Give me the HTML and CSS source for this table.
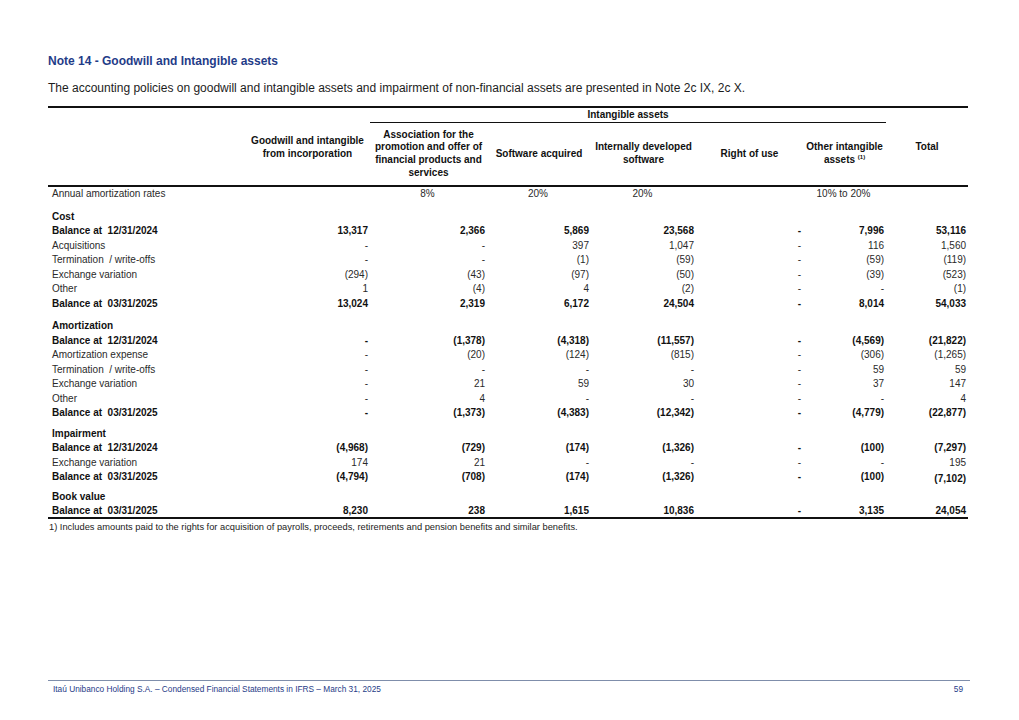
FILE: index.html
```html
<!DOCTYPE html>
<html>
<head>
<meta charset="utf-8">
<link rel="stylesheet" href="styles.css">
</head>
<body>
<div class="page">
  <h1 class="title">Note 14 - Goodwill and Intangible assets</h1>
  <p class="intro">The accounting policies on goodwill and intangible assets and impairment of non-financial assets are presented in Note 2c IX, 2c X.</p>
  <table class="fin">
    <colgroup>
      <col class="c-label"><col class="c1"><col class="c2"><col class="c3"><col class="c4"><col class="c5"><col class="c6"><col class="c7">
    </colgroup>
    <thead>
      <tr class="grp">
        <th></th><th></th>
        <th colspan="5" class="grp-cell">Intangible assets</th>
        <th></th>
      </tr>
      <tr class="hdr">
        <th></th>
        <th class="gw">Goodwill and intangible<br>from incorporation<br>&nbsp;</th>
        <th>Association for the<br>promotion and offer of<br>financial products and<br>services</th>
        <th>Software acquired</th>
        <th>Internally developed<br>software</th>
        <th>Right of use</th>
        <th>Other intangible<br>assets <sup>(1)</sup></th>
        <th>Total<br>&nbsp;</th>
      </tr>
    </thead>
    <tbody>
      <tr class="rates">
        <td class="lbl">Annual amortization rates</td><td></td><td class="ctr">8%</td><td class="ctr">20%</td><td class="ctr">20%</td><td></td><td class="ctr">10% to 20%</td><td></td>
      </tr>
      <tr class="sec first"><td class="lbl b">Cost</td><td></td><td></td><td></td><td></td><td></td><td></td><td></td></tr>
      <tr class="b"><td class="lbl">Balance at&nbsp; 12/31/2024</td><td>13,317</td><td>2,366</td><td>5,869</td><td>23,568</td><td>-</td><td>7,996</td><td>53,116</td></tr>
      <tr><td class="lbl">Acquisitions</td><td>-</td><td>-</td><td>397</td><td>1,047</td><td>-</td><td>116</td><td>1,560</td></tr>
      <tr><td class="lbl">Termination &nbsp;/ write-offs</td><td>-</td><td>-</td><td>(1)</td><td>(59)</td><td>-</td><td>(59)</td><td>(119)</td></tr>
      <tr><td class="lbl">Exchange variation</td><td>(294)</td><td>(43)</td><td>(97)</td><td>(50)</td><td>-</td><td>(39)</td><td>(523)</td></tr>
      <tr><td class="lbl">Other</td><td>1</td><td>(4)</td><td>4</td><td>(2)</td><td>-</td><td>-</td><td>(1)</td></tr>
      <tr class="b"><td class="lbl">Balance at&nbsp; 03/31/2025</td><td>13,024</td><td>2,319</td><td>6,172</td><td>24,504</td><td>-</td><td>8,014</td><td>54,033</td></tr>
      <tr class="sec"><td class="lbl b">Amortization</td><td></td><td></td><td></td><td></td><td></td><td></td><td></td></tr>
      <tr class="b"><td class="lbl">Balance at&nbsp; 12/31/2024</td><td>-</td><td>(1,378)</td><td>(4,318)</td><td>(11,557)</td><td>-</td><td>(4,569)</td><td>(21,822)</td></tr>
      <tr><td class="lbl">Amortization expense</td><td>-</td><td>(20)</td><td>(124)</td><td>(815)</td><td>-</td><td>(306)</td><td>(1,265)</td></tr>
      <tr><td class="lbl">Termination &nbsp;/ write-offs</td><td>-</td><td>-</td><td>-</td><td>-</td><td>-</td><td>59</td><td>59</td></tr>
      <tr><td class="lbl">Exchange variation</td><td>-</td><td>21</td><td>59</td><td>30</td><td>-</td><td>37</td><td>147</td></tr>
      <tr><td class="lbl">Other</td><td>-</td><td>4</td><td>-</td><td>-</td><td>-</td><td>-</td><td>4</td></tr>
      <tr class="b"><td class="lbl">Balance at&nbsp; 03/31/2025</td><td>-</td><td>(1,373)</td><td>(4,383)</td><td>(12,342)</td><td>-</td><td>(4,779)</td><td>(22,877)</td></tr>
      <tr class="sec imp"><td class="lbl b">Impairment</td><td></td><td></td><td></td><td></td><td></td><td></td><td></td></tr>
      <tr class="b"><td class="lbl">Balance at&nbsp; 12/31/2024</td><td>(4,968)</td><td>(729)</td><td>(174)</td><td>(1,326)</td><td>-</td><td>(100)</td><td>(7,297)</td></tr>
      <tr><td class="lbl">Exchange variation</td><td>174</td><td>21</td><td>-</td><td>-</td><td>-</td><td>-</td><td>195</td></tr>
      <tr class="b"><td class="lbl">Balance at&nbsp; 03/31/2025</td><td>(4,794)</td><td>(708)</td><td>(174)</td><td>(1,326)</td><td>-</td><td>(100)</td><td class="low">(7,102)</td></tr>
      <tr class="sec short"><td class="lbl b">Book value</td><td></td><td></td><td></td><td></td><td></td><td></td><td></td></tr>
      <tr class="b last"><td class="lbl">Balance at&nbsp; 03/31/2025</td><td>8,230</td><td>238</td><td>1,615</td><td>10,836</td><td>-</td><td>3,135</td><td>24,054</td></tr>
    </tbody>
  </table>
  <p class="foot-note">1) Includes amounts paid to the rights for acquisition of payrolls, proceeds, retirements and pension benefits and similar benefits.</p>
  <footer class="footer">
    <span class="foot-text">Itaú Unibanco Holding S.A. – Condensed Financial Statements in IFRS – March 31, 2025</span>
    <span class="page-no">59</span>
  </footer>
</div>
</body>
</html>
```
FILE: styles.css
```css
html, body {
  margin: 0;
  padding: 0;
  background: #ffffff;
}
body {
  font-family: "Liberation Sans", Arial, sans-serif;
  color: #1c1c1c;
}
.page {
  width: 1019px;
  height: 720px;
  box-sizing: border-box;
  padding: 54px 49px 0 48px;
  display: flex;
  flex-direction: column;
}
.title {
  margin: 0;
  font-size: 12px;
  line-height: 14px;
  font-weight: bold;
  color: #1f3c88;
}
.intro {
  margin: 13px 0 0 0;
  font-size: 12px;
  line-height: 14px;
  color: #1c1c1c;
}
.fin {
  margin-top: 11px;
  width: 920px;
  border-collapse: collapse;
  table-layout: fixed;
  font-size: 10px;
  border-top: 2px solid #111;
  border-bottom: 2px solid #111;
}
.c-label { width: 197px; }
.c1 { width: 125px; }
.c2 { width: 117px; }
.c3 { width: 104px; }
.c4 { width: 105px; }
.c5 { width: 107px; }
.c6 { width: 83px; }
.c7 { width: 82px; }
.fin th {
  font-weight: bold;
  text-align: center;
  vertical-align: middle;
  padding: 0;
  line-height: 12.7px;
  color: #111;
}
.grp th {
  height: 14px;
  line-height: 14px;
}
.grp .grp-cell {
  border-bottom: 1px solid #111;
}
.hdr th {
  height: 62px;
}
.hdr th.gw {
  line-height: 12.2px;
}
.hdr sup {
  font-size: 6px;
  vertical-align: 4px;
  line-height: 0;
}
.hdr {
  border-bottom: 2px solid #111;
}
.fin td {
  padding: 0 2px 0 0;
  height: 14.5px;
  line-height: 14.5px;
  text-align: right;
  white-space: nowrap;
  color: #2a2a2a;
}
.fin td.lbl {
  text-align: left;
  padding-left: 4px;
}
.fin td.ctr {
  text-align: center;
}
.rates td {
  height: 14px;
  line-height: 14px;
}
.fin tr.b td, .fin td.b {
  font-weight: bold;
  color: #111;
}
.fin tr.sec td {
  height: 14.5px;
  padding-top: 8px;
  vertical-align: bottom;
}
.fin tr.sec.first td {
  padding-top: 8.5px;
}
.fin tr.sec.imp td {
  padding-top: 6px;
}
.fin tr.sec.short td {
  padding-top: 5px;
}
.fin tr.last td {
  height: 13px;
  line-height: 13px;
}
.fin td.low {
  vertical-align: bottom;
  line-height: 12px;
}
.foot-note {
  margin: 2px 0 0 1px;
  font-size: 9.3px;
  line-height: 12px;
  color: #1c1c1c;
}
.footer {
  margin-top: auto;
  margin-bottom: 26px;
  width: 922px;
  border-top: 1px solid #7f8eab;
  display: flex;
  justify-content: space-between;
  align-items: flex-start;
  padding-top: 3px;
  font-size: 8.3px;
  line-height: 10px;
  color: #1f3c88;
}
.foot-text {
  padding-left: 5px;
}
.page-no {
  padding-right: 7px;
  color: #1f3c88;
}
```
